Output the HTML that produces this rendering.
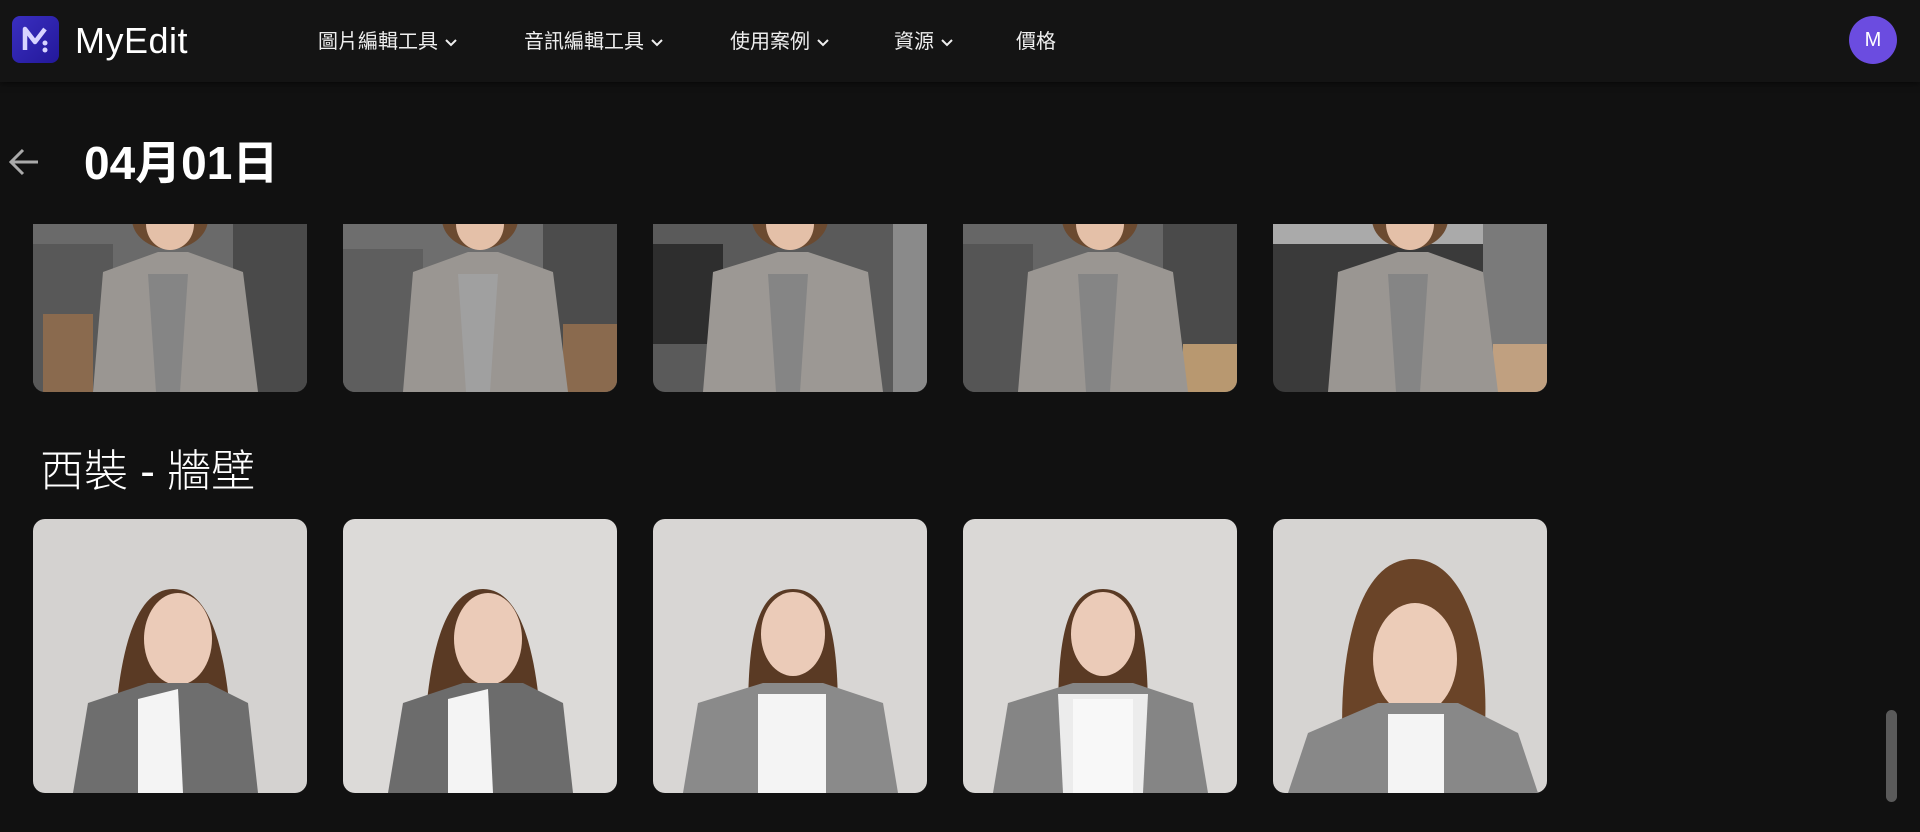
<!DOCTYPE html>
<html><head><meta charset="utf-8">
<style>
*{margin:0;padding:0;box-sizing:border-box}
body{width:1920px;height:832px;background:#111;overflow:hidden;font-family:"Liberation Sans","Noto Sans CJK TC",sans-serif;color:#fff;position:relative}
.hdr{position:absolute;left:0;top:0;width:1920px;height:82px;background:#141414;box-shadow:0 2px 6px rgba(0,0,0,.5)}
.logo{position:absolute;left:12px;top:16px;width:47px;height:47px;border-radius:8px;background:linear-gradient(135deg,#3a2fc0,#23189a)}
.brand{position:absolute;left:75px;top:20px;font-size:36px;color:#fff;font-family:"Liberation Sans",sans-serif;letter-spacing:0.5px}
.nav{position:absolute;top:25px;font-size:20px;color:#eee}
.nav svg{vertical-align:middle;margin-left:6px}
.av{position:absolute;left:1849px;top:16px;width:48px;height:48px;border-radius:50%;background:#6b4ce0;font-size:20px;text-align:center;line-height:48px}
.title{position:absolute;left:84px;top:137px;font-size:46px;font-weight:bold;line-height:52px}
.sec{position:absolute;left:40px;top:447px;font-size:44px;font-weight:300;line-height:50px}
.ph{position:absolute;width:274px;overflow:hidden}
.r1{top:224px;height:168px;border-radius:0 0 12px 12px}
.r2{top:519px;height:274px;border-radius:12px}
.sb{position:absolute;left:1886px;top:710px;width:11px;height:92px;border-radius:6px;background:#5a5a5a}
</style></head><body>
<div class="hdr">
<div class="logo"><svg width="47" height="47" viewBox="0 0 47 47"><path d="M13 34V13l10 13 10-13" fill="none" stroke="#d8d4ff" stroke-width="4.5" stroke-linejoin="round"/><circle cx="33" cy="27" r="2.5" fill="#d8d4ff"/><circle cx="33" cy="34" r="2.5" fill="#d8d4ff"/></svg></div>
<div class="brand">MyEdit</div>
<div class="nav" style="left:318px">圖片編輯工具<svg width="14" height="10"><path d="M2 2l5 5 5-5" stroke="#eee" stroke-width="2" fill="none"/></svg></div>
<div class="nav" style="left:524px">音訊編輯工具<svg width="14" height="10"><path d="M2 2l5 5 5-5" stroke="#eee" stroke-width="2" fill="none"/></svg></div>
<div class="nav" style="left:730px">使用案例<svg width="14" height="10"><path d="M2 2l5 5 5-5" stroke="#eee" stroke-width="2" fill="none"/></svg></div>
<div class="nav" style="left:894px">資源<svg width="14" height="10"><path d="M2 2l5 5 5-5" stroke="#eee" stroke-width="2" fill="none"/></svg></div>
<div class="nav" style="left:1016px">價格</div>
<div class="av">M</div>
</div>
<svg style="position:absolute;left:6px;top:146px" width="36" height="32" viewBox="0 0 36 32"><path d="M32 16H5M17 4L5 16l12 12" stroke="#aaa" stroke-width="3" fill="none"/></svg>
<div class="title">04月01日</div>

<div class="ph r1" style="left:33px"><svg width="274" height="168"><rect width="274" height="168" fill="#6a6a6a"/><rect x="0" y="20" width="80" height="148" fill="#585858"/><rect x="10" y="90" width="50" height="78" fill="#8a6a4e"/><rect x="200" y="0" width="74" height="168" fill="#4a4a4a"/><path d="M60 168l10-120 55-20 30 0 55 20 15 120z" fill="#9a9692"/><path d="M115 50h40l-8 118h-24z" fill="#858585"/><ellipse cx="137" cy="-5" rx="38" ry="30" fill="#6b4a30"/><ellipse cx="137" cy="0" rx="24" ry="26" fill="#e4c0a8"/></svg></div>
<div class="ph r1" style="left:343px"><svg width="274" height="168"><rect width="274" height="168" fill="#6e6e6e"/><rect x="0" y="25" width="80" height="143" fill="#5e5e5e"/><rect x="200" y="0" width="74" height="168" fill="#4c4c4c"/><rect x="220" y="100" width="54" height="68" fill="#8a6a4e"/><path d="M60 168l10-120 55-20 30 0 55 20 15 120z" fill="#9a9692"/><path d="M115 50h40l-8 118h-24z" fill="#a0a0a0"/><ellipse cx="137" cy="-5" rx="38" ry="30" fill="#6b4a30"/><ellipse cx="137" cy="0" rx="24" ry="26" fill="#e4c0a8"/></svg></div>
<div class="ph r1" style="left:653px"><svg width="274" height="168"><rect width="274" height="168" fill="#5a5a5a"/><rect x="0" y="20" width="70" height="100" fill="#2e2e2e"/><rect x="200" y="0" width="74" height="168" fill="#5a5a5a"/><rect x="240" y="0" width="34" height="168" fill="#8a8a8a"/><path d="M50 168l10-120 65-20 30 0 60 20 15 120z" fill="#9c9894"/><path d="M115 50h40l-8 118h-24z" fill="#858585"/><ellipse cx="137" cy="-5" rx="38" ry="30" fill="#6b4a30"/><ellipse cx="137" cy="0" rx="24" ry="26" fill="#e4c0a8"/></svg></div>
<div class="ph r1" style="left:963px"><svg width="274" height="168"><rect width="274" height="168" fill="#666"/><rect x="0" y="20" width="70" height="148" fill="#555"/><rect x="200" y="0" width="74" height="168" fill="#4a4a4a"/><rect x="220" y="120" width="54" height="48" fill="#b89870"/><path d="M55 168l10-120 60-20 30 0 55 20 15 120z" fill="#9a9692"/><path d="M115 50h40l-8 118h-24z" fill="#858585"/><ellipse cx="137" cy="-5" rx="38" ry="30" fill="#6b4a30"/><ellipse cx="137" cy="0" rx="24" ry="26" fill="#e4c0a8"/></svg></div>
<div class="ph r1" style="left:1273px"><svg width="274" height="168"><rect width="274" height="168" fill="#3a3a3a"/><rect x="0" y="0" width="274" height="20" fill="#aaa"/><rect x="210" y="0" width="64" height="168" fill="#7a7a7a"/><rect x="220" y="120" width="54" height="48" fill="#c0a080"/><path d="M55 168l10-120 60-20 30 0 55 20 15 120z" fill="#9a9692"/><path d="M115 50h40l-8 118h-24z" fill="#858585"/><ellipse cx="137" cy="-5" rx="38" ry="30" fill="#6b4a30"/><ellipse cx="137" cy="0" rx="24" ry="26" fill="#e4c0a8"/></svg></div>

<div class="sec">西裝 - 牆壁</div>

<div class="ph r2" style="left:33px"><svg width="274" height="274"><rect width="274" height="274" fill="#d4d2d0"/><path d="M80 270c0-90 10-200 60-200s60 110 60 200z" fill="#5a3a24"/><ellipse cx="145" cy="120" rx="34" ry="46" fill="#ebcbb8"/><path d="M40 274l15-90 60-20h60l40 20 10 90z" fill="#6e6e6e"/><path d="M105 180l40-10 5 104h-45z" fill="#f4f4f4"/></svg></div>
<div class="ph r2" style="left:343px"><svg width="274" height="274"><rect width="274" height="274" fill="#dcdad8"/><path d="M80 270c0-90 10-200 60-200s60 110 60 200z" fill="#5a3a24"/><ellipse cx="145" cy="120" rx="34" ry="46" fill="#ebcbb8"/><path d="M45 274l15-90 60-20h60l40 20 10 90z" fill="#6c6c6c"/><path d="M105 180l40-10 5 104h-45z" fill="#f4f4f4"/></svg></div>
<div class="ph r2" style="left:653px"><svg width="274" height="274"><rect width="274" height="274" fill="#d8d6d4"/><path d="M95 200c0-70 5-130 45-130s45 60 45 130z" fill="#5a3a24"/><ellipse cx="140" cy="115" rx="32" ry="42" fill="#ebcbb8"/><path d="M30 274l15-90 65-20h60l60 20 15 90z" fill="#8a8a8a"/><path d="M105 175h68v99h-68z" fill="#f4f4f4"/></svg></div>
<div class="ph r2" style="left:963px"><svg width="274" height="274"><rect width="274" height="274" fill="#dad8d6"/><path d="M95 200c0-70 5-130 45-130s45 60 45 130z" fill="#5a3a24"/><ellipse cx="140" cy="115" rx="32" ry="42" fill="#ebcbb8"/><path d="M30 274l15-90 65-20h60l60 20 15 90z" fill="#858585"/><path d="M95 175h90l-5 99h-80z" fill="#ececec"/><path d="M110 180h60v94h-60z" fill="#f8f8f8"/></svg></div>
<div class="ph r2" style="left:1273px"><svg width="274" height="274"><rect width="274" height="274" fill="#d6d4d2"/><path d="M70 230c-5-80 10-190 70-190s80 110 70 190z" fill="#6a4428"/><ellipse cx="142" cy="140" rx="42" ry="56" fill="#ecccb8"/><path d="M15 274l20-60 70-30h80l60 30 20 60z" fill="#888"/><path d="M115 195h56v79h-56z" fill="#f4f4f4"/></svg></div>

<div class="sb"></div>
</body></html>
